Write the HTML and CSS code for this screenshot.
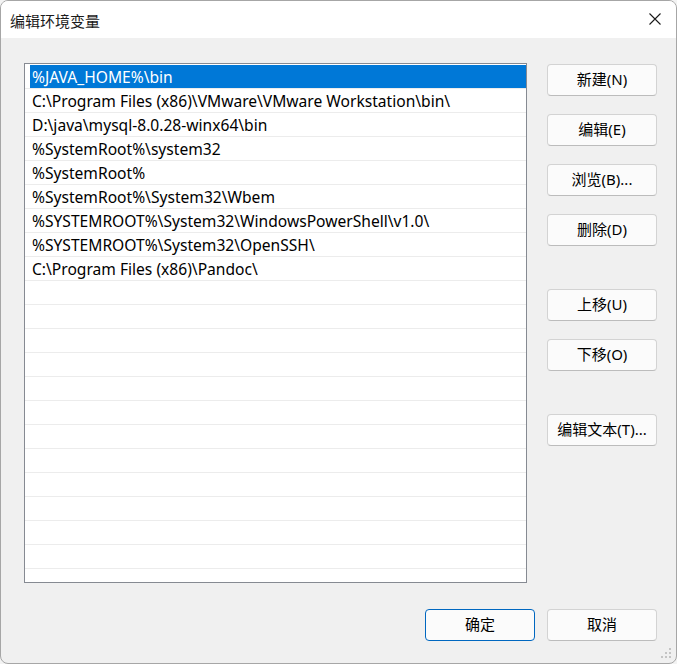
FILE: index.html
```html
<!DOCTYPE html>
<html lang="zh-CN">
<head>
<meta charset="utf-8">
<title>编辑环境变量</title>
<link rel="stylesheet" href="styles.css">
</head>
<body>
<div class="window">
  <div class="titlebar">
    <span class="title">编辑环境变量</span>
    <span class="close" aria-label="关闭">
      <svg width="14" height="14" viewBox="0 0 14 14"><path d="M1.5 1.5 L12.5 12.5 M12.5 1.5 L1.5 12.5" stroke="#1a1a1a" stroke-width="1.1" fill="none"/></svg>
    </span>
  </div>
  <div class="body">
    <div class="main">
      <div class="list">
        <div class="row selected"><span class="sel">%JAVA_HOME%\bin</span></div>
        <div class="row">C:\Program Files (x86)\VMware\VMware Workstation\bin\</div>
        <div class="row">D:\java\mysql-8.0.28-winx64\bin</div>
        <div class="row">%SystemRoot%\system32</div>
        <div class="row">%SystemRoot%</div>
        <div class="row">%SystemRoot%\System32\Wbem</div>
        <div class="row">%SYSTEMROOT%\System32\WindowsPowerShell\v1.0\</div>
        <div class="row">%SYSTEMROOT%\System32\OpenSSH\</div>
        <div class="row">C:\Program Files (x86)\Pandoc\</div>
        <div class="row"></div>
        <div class="row"></div>
        <div class="row"></div>
        <div class="row"></div>
        <div class="row"></div>
        <div class="row"></div>
        <div class="row"></div>
        <div class="row"></div>
        <div class="row"></div>
        <div class="row"></div>
        <div class="row"></div>
        <div class="row"></div>
      </div>
      <div class="side">
        <div class="group">
          <button class="btn">新建(N)</button>
          <button class="btn">编辑(E)</button>
          <button class="btn">浏览(B)...</button>
          <button class="btn">删除(D)</button>
        </div>
        <div class="group">
          <button class="btn">上移(U)</button>
          <button class="btn">下移(O)</button>
        </div>
        <div class="group">
          <button class="btn">编辑文本(T)...</button>
        </div>
      </div>
    </div>
    <div class="footer">
      <button class="btn primary">确定</button>
      <button class="btn">取消</button>
    </div>
  </div>
  <svg class="grip" width="12" height="12" viewBox="0 0 12 12">
    <rect x="8" y="0" width="2" height="2" fill="#c4c4c4"/>
    <rect x="4" y="4" width="2" height="2" fill="#c4c4c4"/>
    <rect x="8" y="4" width="2" height="2" fill="#c4c4c4"/>
    <rect x="0" y="8" width="2" height="2" fill="#c4c4c4"/>
    <rect x="4" y="8" width="2" height="2" fill="#c4c4c4"/>
    <rect x="8" y="8" width="2" height="2" fill="#c4c4c4"/>
  </svg>
</div>
</body>
</html>
```
FILE: styles.css
```css
* { box-sizing: border-box; }
html, body {
  margin: 0;
  padding: 0;
  background: #f3f3f3;
}
body {
  font-family: "Noto Sans", "Noto Sans CJK SC", sans-serif;
  color: #000;
}
.window {
  position: relative;
  width: 677px;
  height: 664px;
  border: 1px solid #a6a6a6;
  border-radius: 8px;
  overflow: hidden;
  display: flex;
  flex-direction: column;
  background: #f0f0f0;
}
.titlebar {
  height: 37px;
  background: #ffffff;
  display: flex;
  align-items: center;
  justify-content: space-between;
  padding: 0 14px 0 9px;
  flex: none;
}
.title {
  font-family: "Noto Sans CJK SC", sans-serif;
  font-size: 15px;
  color: #1a1a1a;
  padding-top: 1px;
}
.close {
  display: flex;
  width: 14px;
  height: 14px;
  margin-bottom: 1px;
}
.body {
  flex: 1;
  display: flex;
  flex-direction: column;
  padding: 25px 19px 22px 23px;
}
.main {
  display: flex;
  gap: 20px;
}
.list {
  width: 504px;
  height: 520px;
  background: #ffffff;
  border: 1px solid #868a92;
  padding-top: 1px;
  overflow: hidden;
}
.row {
  height: 24px;
  border-bottom: 1px solid #ececec;
  padding-left: 7px;
  font-size: 15.6px;
  line-height: 24px;
  white-space: nowrap;
  overflow: hidden;
}
.row.selected {
  padding-left: 5px;
}
.sel {
  display: block;
  height: 23px;
  background: #0078d7;
  color: #ffffff;
  padding-left: 2px;
}
.side {
  width: 110px;
  display: flex;
  flex-direction: column;
  gap: 43px;
  padding-top: 1px;
}
.group {
  display: flex;
  flex-direction: column;
  gap: 18px;
}
.btn {
  width: 110px;
  height: 32px;
  background: #fbfbfb;
  border: 1px solid #d3d3d3;
  border-bottom-color: #bcbcbc;
  border-radius: 4px;
  font-family: "Noto Sans", "Noto Sans CJK SC", sans-serif;
  font-size: 15px;
  line-height: 20px;
  color: #000;
  padding: 0 0 3px 0;
}
.btn.primary {
  border: 1px solid #0067c0;
}
.footer {
  margin-top: 26px;
  display: flex;
  justify-content: flex-end;
  gap: 12px;
}
.grip {
  position: absolute;
  right: 3px;
  bottom: 3px;
}
```
